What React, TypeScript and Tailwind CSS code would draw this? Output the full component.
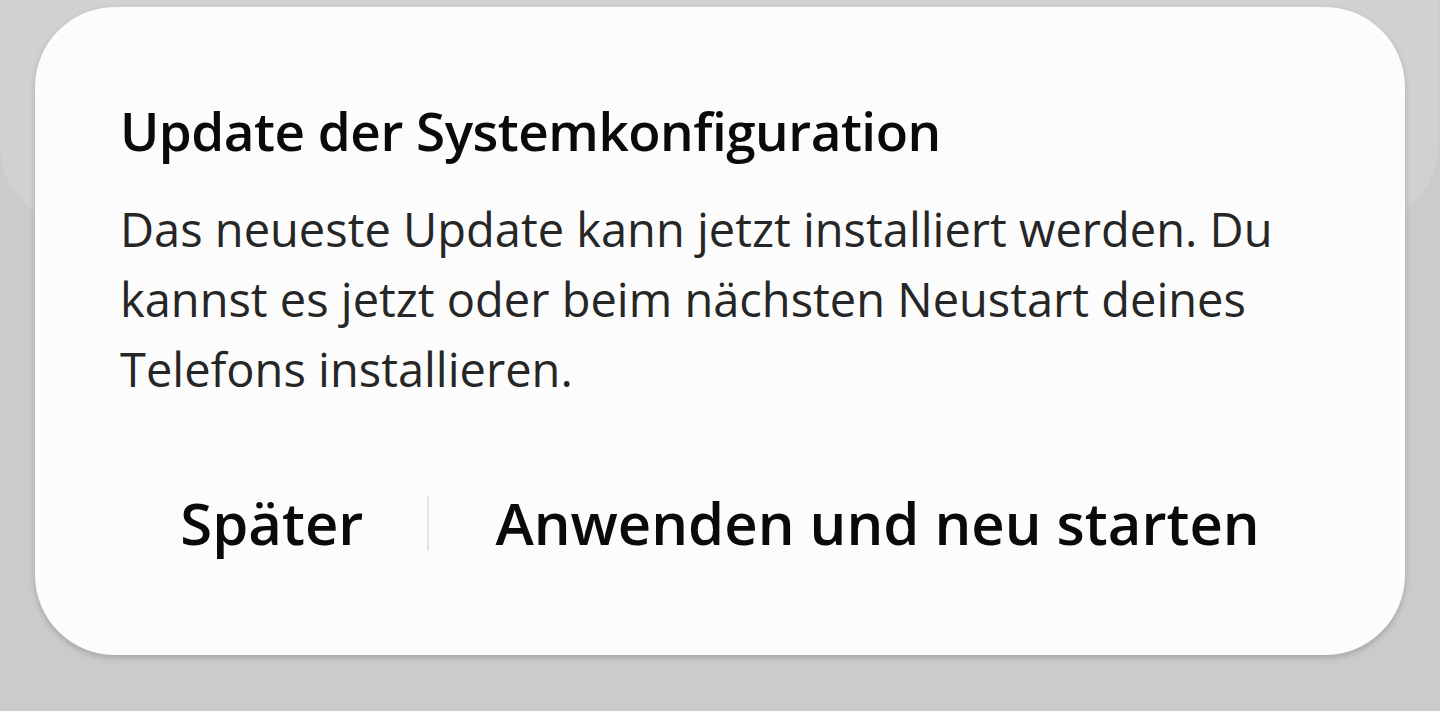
export default function App() {
  return (
    <div
      className="relative h-[711px] w-[1440px] overflow-hidden bg-[#cbcbcb]"
      style={{ fontFamily: '"Open Sans", "Noto Sans", sans-serif' }}
    >
      {/* card peeking out behind the dialog */}
      <div className="absolute left-0 top-[-100px] h-[325px] w-[1438px] rounded-[80px] bg-[#d1d1d1]" />

      <div className="relative px-[35px] pt-[7px]">
        <div className="flex h-[648px] flex-col rounded-[80px] bg-[#fcfcfc] px-[85px] pt-[89px] shadow-[0_3px_6px_rgba(0,0,0,0.18)]">
          <h1 className="text-[53px] font-semibold leading-[70px] tracking-[-0.5px] text-[#0a0a0a]">
            Update der Systemkonfiguration
          </h1>
          <p className="mt-[28px] text-[47px] leading-[70px] text-[#262626]">
            Das neueste Update kann jetzt installiert werden. Du kannst es jetzt
            oder beim nächsten Neustart deines Telefons installieren.
          </p>
          <div className="mt-[79px] flex items-center justify-center whitespace-nowrap">
            <button className="shrink-0 pr-[64px] text-[58px] font-semibold leading-[80px] text-[#0a0a0a]">
              Später
            </button>
            <div className="h-[55px] w-[2px] shrink-0 bg-[#e3e3e3]" />
            <button className="shrink-0 pl-[66px] text-[58px] font-semibold leading-[80px] text-[#0a0a0a]">
              Anwenden und neu starten
            </button>
          </div>
        </div>
      </div>
    </div>
  );
}
